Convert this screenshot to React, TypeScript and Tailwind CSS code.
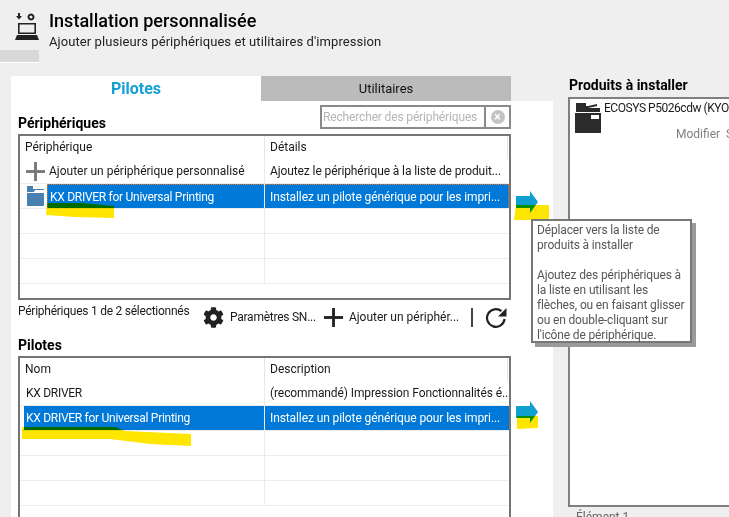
import { FaCog } from "react-icons/fa";

type Row = { icon?: "plus" | "folder"; name?: string; detail?: string; selected?: boolean; tight?: boolean };

const PlusIcon = ({ className }: { className: string }) => (
  <svg viewBox="0 0 20 20" className={className} fill="currentColor">
    <rect x="8.5" y="0" width="3" height="20" />
    <rect x="0" y="8.5" width="20" height="3" />
  </svg>
);

const FolderIcon = () => (
  <svg viewBox="0 0 17 20" className="ml-[7px] h-[20px] w-[17px] text-[#4a80b0]" fill="currentColor">
    <path d="M0 0h6v3h11v1H8l-1 2H0z" />
    <rect x="0" y="7" width="17" height="13" />
  </svg>
);

const PrinterIcon = () => (
  <svg viewBox="0 0 26 30" className="h-[30px] w-[26px] shrink-0 text-[#2b2b2b]" fill="currentColor">
    <path d="M1 0h10v3h2l9-2v2l-9 2v3h12v0H1z" />
    <rect x="1" y="5" width="24" height="4" />
    <path d="M0 10h26v20H0z" />
    <rect x="16" y="12" width="8" height="4" fill="#fff" />
  </svg>
);

const HeaderIcon = () => (
  <svg viewBox="0 0 24 28" className="h-[28px] w-[24px] text-[#222]" fill="currentColor">
    <path d="M3 0h2v3h2l-3 3.5L1 3h2z" />
    <path d="M16 .5a3.5 3.5 0 1 0 .01 0zm0 2a1.5 1.5 0 1 1-.01 0z" />
    <path d="M3 10h18v11H3zM4.6 11.6v7.8h14.8v-7.8z" fillRule="evenodd" />
    <path d="M2 22h20l2 5H0z" />
  </svg>
);

const Refresh = () => (
  <svg viewBox="0 0 22 22" className="h-[22px] w-[22px] text-[#222]" fill="none" stroke="currentColor" strokeWidth="2.2">
    <path d="M16.5 5.2A8.8 8.8 0 1 0 19.6 13" />
    <path d="M21.5 2v8.5H13z" fill="currentColor" stroke="none" />
  </svg>
);

const Arrow = () => (
  <svg viewBox="0 0 22 22" className="h-[22px] w-[22px]">
    <path d="M0 5h14V0l8 11-8 11v-5H0z" fill="#0f9fd0" />
  </svg>
);

const DataTable = ({
  cols,
  rows,
  className,
  focused,
}: {
  cols: [string, string];
  rows: Row[];
  className: string;
  focused?: boolean;
}) => (
  <div className={`flex w-[493px] shrink-0 flex-col overflow-hidden border-2 border-[#757575] bg-white ${className}`}>
    <div className="flex h-[23px] shrink-0 items-center text-[#1a1a1a]">
      <div className="flex h-full w-[245px] items-center border-r border-[#e4e4e4] pl-[5px]">{cols[0]}</div>
      <div className="flex h-full w-[243px] items-center border-r border-[#e4e4e4] pl-[5px]">{cols[1]}</div>
    </div>
    {rows.map((row, i) => (
      <div key={i} className="flex h-[25px] shrink-0 border-b border-[#ececec]">
        <div className="flex w-[245px] items-center border-r border-[#ececec]">
          {row.icon && (
            <div className="flex w-[27px] shrink-0 items-center text-[#777]">
              {row.icon === "plus" ? <PlusIcon className="ml-[6px] h-[19px] w-[19px]" /> : <FolderIcon />}
            </div>
          )}
          {row.name && (
            <div
              className={`flex h-full flex-1 items-center whitespace-nowrap pt-px ${row.icon ? "pl-[2px]" : "ml-[4px] pl-[2px]"} ${
                row.tight ? "tracking-[-0.28px]" : ""
              } ${row.selected ? "bg-[#0078d7] text-white" : "text-[#1a1a1a]"} ${
                focused && row.selected ? "border-l border-t border-dotted border-[#e8772e]" : ""
              }`}
            >
              {row.name}
            </div>
          )}
        </div>
        {row.detail ? (
          <div
            className={`flex w-[244px] items-center whitespace-nowrap pl-[5px] pt-px tracking-[-0.1px] ${
              row.selected ? "bg-[#0078d7] text-white" : "text-[#1a1a1a]"
            } ${focused && row.selected ? "border-r border-t border-dotted border-[#e8772e]" : ""}`}
          >
            {row.detail}
          </div>
        ) : null}
      </div>
    ))}
  </div>
);

export default function App() {
  const peripherals: Row[] = [
    {
      icon: "plus",
      name: "Ajouter un périphérique personnalisé",
      detail: "Ajoutez le périphérique à la liste de produit...",
    },
    {
      icon: "folder",
      name: "KX DRIVER for Universal Printing",
      detail: "Installez un pilote générique pour les impri...",
      selected: true,
      tight: true,
    },
    {},
    {},
    {},
  ];
  const drivers: Row[] = [
    { name: "KX DRIVER", detail: "(recommandé) Impression Fonctionnalités é...", tight: true },
    {
      name: "KX DRIVER for Universal Printing",
      detail: "Installez un pilote générique pour les impri...",
      selected: true,
      tight: true,
    },
    {},
    {},
    {},
  ];

  return (
    <div className="relative h-[517px] w-[729px] overflow-hidden bg-[#efefef] font-['Roboto',sans-serif] text-[12px] leading-[15px] text-[#1a1a1a]">
      <div className="flex h-[76px]">
        <div className="flex w-[39px] shrink-0 flex-col">
          <div className="flex h-[50px] items-start justify-end pt-[13px]">
            <HeaderIcon />
          </div>
          <div className="h-[12px] bg-[#d9d9d9]" />
          <div className="h-px bg-white" />
        </div>
        <div className="pl-[10px] pt-[10px]">
          <div className="text-[18px] font-medium leading-[22px] text-black">Installation personnalisée</div>
          <div className="mt-[2px] text-[13px] leading-[16px] tracking-[0.08px] text-[#222]">
            Ajouter plusieurs périphériques et utilitaires d'impression
          </div>
        </div>
      </div>

      <div className="flex pl-[11px]">
        <div className="w-[542px] shrink-0">
          <div className="flex h-[25px] w-[500px]">
            <div className="flex w-[250px] items-center justify-center bg-white text-[16px] font-bold text-[#149fd6]">
              Pilotes
            </div>
            <div className="flex w-[250px] items-center justify-center bg-[#bbbbbb] text-[13px] text-[#111]">
              Utilitaires
            </div>
          </div>

          <div className="h-[416px] bg-white pl-[7px]">
            <div className="flex h-[33px] w-[493px] items-start justify-between">
              <div className="pt-[14px] text-[14px] font-bold leading-[16px] text-black">Périphériques</div>
              <div className="mt-[4px] flex h-[24px]">
                <div className="flex w-[166px] items-center whitespace-nowrap border-2 border-[#8a8a8a] pl-[1px] tracking-[-0.15px] text-[#b5b5b5]">
                  Rechercher des périphériques
                </div>
                <div className="flex w-[25px] items-center justify-center border-2 border-l-0 border-[#8a8a8a]">
                  <div className="flex h-[14px] w-[14px] items-center justify-center rounded-full bg-[#c4c4c4] text-[12px] font-bold leading-none text-white">
                    ×
                  </div>
                </div>
              </div>
            </div>

            <div className="flex items-start">
              <DataTable cols={["Périphérique", "Détails"]} rows={peripherals} className="h-[166px]" focused />
              <div className="ml-[5px] mt-[57px]">
                <Arrow />
              </div>
            </div>

            <div className="flex h-[34px] w-[493px] items-start whitespace-nowrap">
              <div className="w-[185px] pt-[4px] tracking-[-0.25px]">Périphériques 1 de 2 sélectionnés</div>
              <div className="mt-[6px] flex items-center">
                <FaCog className="h-[21px] w-[21px] text-[#222]" />
                <span className="ml-[6px] tracking-[-0.25px]">Paramètres SN...</span>
                <PlusIcon className="ml-[8px] h-[19px] w-[19px] text-[#222]" />
                <span className="ml-[6px]">Ajouter un périphér...</span>
                <div className="ml-[12px] h-[19px] w-[2px] bg-[#444]" />
                <div className="ml-[12px]">
                  <Refresh />
                </div>
              </div>
            </div>

            <div className="flex h-[22px] items-center text-[14px] font-bold text-black">Pilotes</div>

            <div className="flex items-start">
              <DataTable cols={["Nom", "Description"]} rows={drivers} className="h-[166px]" />
              <div className="ml-[5px] mt-[45px]">
                <Arrow />
              </div>
            </div>
          </div>
        </div>

        <div className="ml-[15px] flex-1">
          <div className="flex h-[21px] items-start pl-[1px] pt-px text-[14px] font-bold leading-[17px] text-black">
            Produits à installer
          </div>
          <div className="h-[410px] w-[180px] border-2 border-r-0 border-[#808080] bg-white pl-[5px] pt-[4px]">
            <div className="flex">
              <PrinterIcon />
              <div className="ml-[3px] -mt-[2px] min-w-0">
                <div className="whitespace-nowrap tracking-[-0.45px]">ECOSYS P5026cdw (KYO-2</div>
                <div className="mt-[11px] whitespace-nowrap pl-[72px] text-[#808080]">Modifier&nbsp;&nbsp;S</div>
              </div>
            </div>
          </div>
          <div className="pl-[8px] pt-[3px] text-[#666]">Élément 1</div>
        </div>
      </div>

      <svg viewBox="0 0 729 517" className="pointer-events-none absolute left-0 top-0 h-[517px] w-[729px] mix-blend-multiply" fill="#ffe600">
        <path d="M47 203L82 203L114 206L114 218L75 217L46 215Z" />
        <path d="M22 427L115 427L125 431L191 434L191 446L150 444L110 439L22 439Z" />
        <path d="M516 205L549 205L549 220L514 220Z" />
        <path d="M517 416L538 416L538 428L517 429Z" />
      </svg>

      <div className="absolute left-[531px] top-[219px] h-[124px] w-[161px] whitespace-nowrap border-2 border-[#777] bg-white px-[4px] pt-[2px] tracking-[-0.15px] text-[#575757] shadow-[4px_4px_0_#9a9a9a]">
        <p>
          Déplacer vers la liste de
          <br />
          produits à installer
        </p>
        <p className="mt-[15px]">
          Ajoutez des périphériques à
          <br />
          la liste en utilisant les
          <br />
          flèches, ou en faisant glisser
          <br />
          ou en double-cliquant sur
          <br />
          l'icône de périphérique.
        </p>
      </div>
    </div>
  );
}
